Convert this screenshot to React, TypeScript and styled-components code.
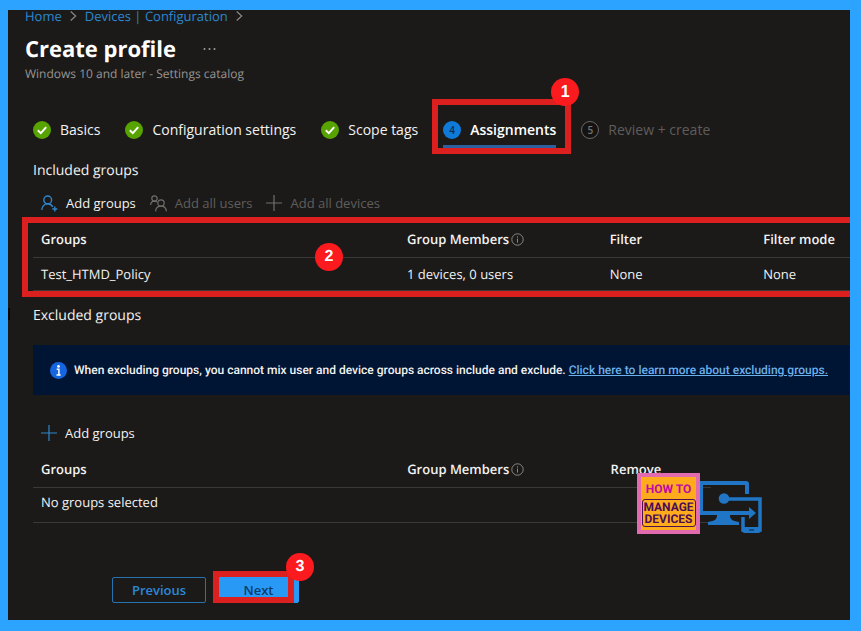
import React from "react";
import styled, { createGlobalStyle } from "styled-components";

const GlobalStyle = createGlobalStyle`
  *, *::before, *::after { box-sizing: border-box; }
  body { margin: 0; background: #2ba3ff; }
  button, a { font: inherit; }
`;

const Frame = styled.div`
  min-height: 100vh;
  display: flex;
  padding: 10px 11px 11px 8px;
  background: #2ba3ff;
`;

const Panel = styled.main`
  flex: 1;
  min-width: 0;
  padding-left: 17px;
  background: #1b1a19;
  color: #f3f2f1;
  font-family: "Open Sans", "Noto Sans", sans-serif;
  font-size: 13px;
  line-height: 20px;
  text-rendering: geometricPrecision;
`;

const Breadcrumb = styled.nav`
  display: flex;
  align-items: center;
  gap: 8px;
  line-height: 12px;
  color: #8a8886;
`;

const Crumb = styled.a`
  color: #2b88d0;
  text-decoration: none;
`;

const TitleRow = styled.div`
  display: flex;
  align-items: center;
  gap: 27px;
  margin-top: 12px;
`;

const Title = styled.h1`
  margin: 0;
  font-size: 22px;
  line-height: 30px;
  font-weight: 700;
  color: #ffffff;
`;

const MoreButton = styled.button`
  display: flex;
  padding: 0;
  border: 0;
  background: none;
  color: #a19f9d;
`;

const Subtitle = styled.p`
  margin: 0;
  font-size: 12px;
  color: #979593;
`;

const Body = styled.div`
  padding-left: 8px;
`;

const Steps = styled.div`
  display: flex;
  gap: 25px;
  margin-top: 36px;
`;

const Step = styled.button<{ $active?: boolean }>`
  position: relative;
  display: flex;
  align-items: center;
  gap: 9px;
  padding: 0;
  border: 0;
  background: none;
  white-space: nowrap;
  font-size: 14px;
  font-weight: ${(p) => (p.$active ? 600 : 400)};
  color: ${(p) => (p.$active ? "#ffffff" : "#f3f2f1")};

  &:disabled {
    color: #5f5d5b;
  }
`;

const StepNumber = styled.span<{ $active?: boolean }>`
  display: grid;
  place-items: center;
  width: 18px;
  height: 18px;
  border-radius: 50%;
  border: ${(p) => (p.$active ? "0" : "1px solid #6a6866")};
  background: ${(p) => (p.$active ? "#0f7ad8" : "#141312")};
  color: ${(p) => (p.$active ? "#0b2c55" : "#777573")};
  font-size: 10px;
  line-height: 16px;
  font-weight: 600;
`;

const ActiveLine = styled.span`
  position: absolute;
  left: 0;
  right: 0;
  bottom: -8px;
  height: 3px;
  background: #2c5f9e;
`;

const StepOutline = styled.span`
  position: absolute;
  inset: -21px -15px -14px -11px;
  border: 6px solid #dc2020;
`;

const Badge = styled.span<{ $top: string; $left: string }>`
  position: absolute;
  top: ${(p) => p.$top};
  left: ${(p) => p.$left};
  display: grid;
  place-items: center;
  width: 28px;
  height: 28px;
  border-radius: 50%;
  background: #fb1a1e;
  color: #ffffff;
  font-family: "Liberation Sans", Arial, sans-serif;
  font-size: 16px;
  line-height: 20px;
  font-weight: 700;
`;

const SectionTitle = styled.h2<{ $gap: number }>`
  margin: ${(p) => p.$gap}px 0 0;
  font-size: 14px;
  line-height: 20px;
  font-weight: 400;
`;

const Toolbar = styled.div<{ $gap: number }>`
  display: flex;
  gap: 14px;
  margin-top: ${(p) => p.$gap}px;
  padding-left: 8px;
`;

const ToolButton = styled.button`
  display: flex;
  align-items: center;
  gap: 8px;
  padding: 0;
  border: 0;
  background: none;
  color: #f3f2f1;
  font-weight: 500;
  white-space: nowrap;

  svg { color: #2f86cc; }
  &:disabled { color: #605e5c; font-weight: 400; }
  &:disabled svg { color: #716f6d; }
`;

const TableArea = styled.div`
  position: relative;
  margin-top: 8px;
`;

const TableOutline = styled.div`
  position: absolute;
  inset: -4px 0 -6px -11px;
  border: 6px solid #dc2020;
  border-right: 0;
`;

const Table = styled.table<{ $width?: string }>`
  width: ${(p) => p.$width ?? "100%"};
  table-layout: fixed;
  border-collapse: separate;
  border-spacing: 0;
`;

const Col = styled.col<{ $width: string }>`
  width: ${(p) => p.$width};
`;

const HeadCell = styled.th`
  height: 37px;
  padding: 0 0 0 8px;
  border-bottom: 1px solid #3a3937;
  text-align: left;
  font-weight: 600;
  white-space: nowrap;
`;

const Cell = styled.td<{ $low?: boolean }>`
  height: ${(p) => (p.$low ? 35 : 33)}px;
  padding: 0 0 ${(p) => (p.$low ? 6 : 0)}px 8px;
  border-bottom: 1px solid #3a3937;
  font-weight: 400;
  white-space: nowrap;
`;

const HeadLabel = styled.span`
  display: flex;
  align-items: center;
  gap: 2px;
`;

const Banner = styled.div`
  display: flex;
  align-items: center;
  gap: 7px;
  min-height: 50px;
  margin-top: 19px;
  padding: 0 0 0 17px;
  background: #001433;
  color: #f3f2f1;
  font-family: Roboto, "Open Sans", sans-serif;
  font-size: 12px;
  font-weight: 500;

  svg { flex: none; }
`;

const BannerLink = styled.a`
  color: #6cb0ea;
`;

const Actions = styled.div`
  display: flex;
  gap: 12px;
  margin: 54px 0 17px 79px;
`;

const NextWrap = styled.div`
  position: relative;
`;

const ActionButton = styled.button<{ $primary?: boolean }>`
  width: ${(p) => (p.$primary ? 81 : 94)}px;
  height: 26px;
  padding: 0;
  border: 1px solid ${(p) => (p.$primary ? "#2899f5" : "#2773b0")};
  border-radius: 2px;
  background: ${(p) => (p.$primary ? "#2899f5" : "transparent")};
  color: ${(p) => (p.$primary ? "#0c3d6b" : "#2b88d8")};
  font-weight: 600;
`;

const NextOutline = styled.span`
  position: absolute;
  inset: -6px 5px 0 -5px;
  border: 6px solid #dc2020;
`;

const Brand = styled.div`
  position: absolute;
  top: 22px;
  right: 88px;
  display: flex;
  align-items: flex-start;
`;

const BrandTile = styled.div`
  display: flex;
  flex-direction: column;
  align-items: center;
  gap: 2px;
  width: 63px;
  height: 61px;
  padding-top: 4px;
  border: 4px solid #e26bb0;
  background: #ffab1c;
  font-family: Roboto, "Liberation Sans", sans-serif;
  font-weight: 700;
`;

const BrandTop = styled.span`
  color: #bd0aa5;
  font-size: 12px;
  line-height: 16px;
  white-space: nowrap;
`;

const BrandBox = styled.span`
  width: 54px;
  padding: 1px 0;
  border: 1px solid #4b124c;
  border-radius: 3px;
  color: #4b0d58;
  font-size: 12px;
  line-height: 12px;
  text-align: center;
`;

const EdgeMark = styled.span`
  position: absolute;
  left: -25px;
  top: 2px;
  width: 2px;
  height: 12px;
  background: #050505;
`;

const ExcludedHeader = styled.div`
  position: relative;
`;

const CheckIcon = () => (
  <svg width="18" height="18" viewBox="0 0 18 18" aria-hidden="true">
    <circle cx="9" cy="9" r="9" fill="#57a300" />
    <path d="M4.8 9.2 7.8 12.1 13.2 6.1" fill="none" stroke="#fff" strokeWidth="2" />
  </svg>
);

const ChevronIcon = () => (
  <svg width="7" height="12" viewBox="0 0 7 12" aria-hidden="true">
    <path d="M.7 1.5 5.7 6 .7 10.5" fill="none" stroke="currentColor" strokeWidth="1.2" />
  </svg>
);

const PersonAddIcon = () => (
  <svg width="17" height="17" viewBox="0 0 17 17" fill="none" stroke="currentColor" strokeWidth="1.4" aria-hidden="true">
    <circle cx="6.7" cy="4.9" r="3.9" />
    <path d="M.8 15c.3-3.6 2.7-6.2 5.9-6.2 2.3 0 4 1.2 5 3.1M11.3 14h5M13.8 11.5v5" />
  </svg>
);

const PeopleIcon = () => (
  <svg width="17" height="17" viewBox="0 0 17 17" fill="none" stroke="currentColor" strokeWidth="1.2" aria-hidden="true">
    <circle cx="4.5" cy="3.5" r="2.7" />
    <circle cx="11" cy="8" r="3.2" />
    <path d="M.6 10c.2-2.3 1.7-3.8 3.9-3.8 1 0 1.8.3 2.4.8M5.6 16.4c.2-3.1 2.3-5.2 5.4-5.2s5.2 2.1 5.4 5.2" />
  </svg>
);

const PlusIcon = () => (
  <svg width="16" height="16" viewBox="0 0 16 16" aria-hidden="true">
    <path d="M8 0v16M0 8h16" stroke="currentColor" strokeWidth="1.2" />
  </svg>
);

const InfoOutlineIcon = () => (
  <svg width="13" height="13" viewBox="0 0 13 13" aria-hidden="true">
    <circle cx="6.5" cy="6.5" r="5.7" fill="none" stroke="#8a8886" />
    <path d="M6.5 5.6v4M6.5 3.3v1.3" stroke="#8a8886" />
  </svg>
);

const InfoIcon = () => (
  <svg width="17" height="17" viewBox="0 0 17 17" aria-hidden="true">
    <circle cx="8.5" cy="8.5" r="8.5" fill="#1565e0" />
    <circle cx="8.5" cy="4.4" r="1.4" fill="#fff" />
    <path d="M6.7 7.3h2.2v5.5M6.5 13h4.2" fill="none" stroke="#fff" strokeWidth="1.5" />
  </svg>
);

const DotsIcon = () => (
  <svg width="13" height="4" viewBox="0 0 13 4" fill="currentColor" aria-hidden="true">
    <circle cx="1.5" cy="2" r="1" />
    <circle cx="6.5" cy="2" r="1" />
    <circle cx="11.5" cy="2" r="1" />
  </svg>
);

const DevicesIcon = () => (
  <svg width="62" height="61" viewBox="0 0 62 61" aria-hidden="true">
    <g fill="none" stroke="#2076c4" strokeWidth="4">
      <path d="M1 8V40H51" />
      <path d="M0 10H46Q47 10 47 11V21" />
      <path d="M25 26H60V57H43V44" strokeWidth="3.5" />
    </g>
    <g fill="#2076c4">
      <circle cx="24" cy="25.5" r="5.3" />
      <path d="M49 34 56 40 49 46ZM17 42H30C30 46 32 48 39 49V52H8V49C15 48 17 46 17 42Z" />
      <path d="M42 54H61V57Q61 60 58 60H45Q42 60 42 57Z" />
    </g>
    <path d="M49 57H54" stroke="#123c65" strokeWidth="1.5" />
  </svg>
);

const doneSteps = ["Basics", "Configuration settings", "Scope tags"];

export default function App() {
  return (
    <>
      <GlobalStyle />
      <Frame>
        <Panel>
          <Breadcrumb aria-label="Breadcrumb">
            <Crumb href="#home">Home</Crumb>
            <ChevronIcon />
            <Crumb href="#configuration">Devices | Configuration</Crumb>
            <ChevronIcon />
          </Breadcrumb>
          <TitleRow>
            <Title>Create profile</Title>
            <MoreButton aria-label="More actions"><DotsIcon /></MoreButton>
          </TitleRow>
          <Subtitle>Windows 10 and later - Settings catalog</Subtitle>

          <Body>
            <Steps>
              {doneSteps.map((name) => (
                <Step key={name} type="button">
                  <CheckIcon />
                  {name}
                </Step>
              ))}
              <Step type="button" $active aria-current="step">
                <StepNumber $active>4</StepNumber>
                Assignments
                <ActiveLine />
                <StepOutline />
                <Badge $top="-42px" $left="calc(100% - 5px)">1</Badge>
              </Step>
              <Step type="button" disabled>
                <StepNumber>5</StepNumber>
                Review + create
              </Step>
            </Steps>

            <SectionTitle $gap={21}>Included groups</SectionTitle>
            <Toolbar $gap={12}>
              <ToolButton type="button"><PersonAddIcon />Add groups</ToolButton>
              <ToolButton type="button" disabled><PeopleIcon />Add all users</ToolButton>
              <ToolButton type="button" disabled><PlusIcon />Add all devices</ToolButton>
            </Toolbar>
            <TableArea>
              <Table>
                <colgroup>
                  <Col $width="44.8%" />
                  <Col $width="24.8%" />
                  <Col $width="18.8%" />
                  <Col $width="11.6%" />
                </colgroup>
                <thead>
                  <tr>
                    <HeadCell scope="col">Groups</HeadCell>
                    <HeadCell scope="col"><HeadLabel>Group Members<InfoOutlineIcon /></HeadLabel></HeadCell>
                    <HeadCell scope="col">Filter</HeadCell>
                    <HeadCell scope="col">Filter mode</HeadCell>
                  </tr>
                </thead>
                <tbody>
                  <tr>
                    <Cell>Test_HTMD_Policy</Cell>
                    <Cell>1 devices, 0 users</Cell>
                    <Cell>None</Cell>
                    <Cell>None</Cell>
                  </tr>
                </tbody>
              </Table>
              <TableOutline />
              <Badge $top="22px" $left="34.5%">2</Badge>
            </TableArea>

            <ExcludedHeader>
              <EdgeMark />
              <SectionTitle $gap={15}>Excluded groups</SectionTitle>
            </ExcludedHeader>
            <Banner role="note">
              <InfoIcon />
              <span>
                When excluding groups, you cannot mix user and device groups across include and exclude.{" "}
                <BannerLink href="#excluding-groups">Click here to learn more about excluding groups.</BannerLink>
              </span>
            </Banner>
            <Toolbar $gap={28}>
              <ToolButton type="button"><PlusIcon />Add groups</ToolButton>
            </Toolbar>
            <TableArea>
              <Table $width="83%">
                <colgroup>
                  <Col $width="54%" />
                  <Col $width="30%" />
                  <Col $width="16%" />
                </colgroup>
                <thead>
                  <tr>
                    <HeadCell scope="col">Groups</HeadCell>
                    <HeadCell scope="col"><HeadLabel>Group Members<InfoOutlineIcon /></HeadLabel></HeadCell>
                    <HeadCell scope="col">Remove</HeadCell>
                  </tr>
                </thead>
                <tbody>
                  <tr>
                    <Cell colSpan={3} $low>No groups selected</Cell>
                  </tr>
                </tbody>
              </Table>
              <Brand>
                <BrandTile>
                  <BrandTop>HOW TO</BrandTop>
                  <BrandBox>MANAGE DEVICES</BrandBox>
                </BrandTile>
                <DevicesIcon />
              </Brand>
            </TableArea>

            <Actions>
              <ActionButton type="button">Previous</ActionButton>
              <NextWrap>
                <ActionButton type="button" $primary>Next</ActionButton>
                <NextOutline />
                <Badge $top="-24px" $left="68px">3</Badge>
              </NextWrap>
            </Actions>
          </Body>
        </Panel>
      </Frame>
    </>
  );
}
